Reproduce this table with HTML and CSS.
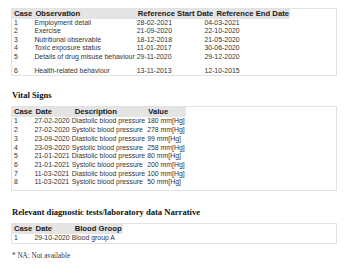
FILE: index.html
```html
<!DOCTYPE html>
<html>
<head>
<meta charset="utf-8">
<link rel="stylesheet" href="styles.css">
</head>
<body>
<div class="box box-first">
  <table class="grid">
    <tr class="head"><th>Case</th><th>Observation</th><th>Reference Start Date</th><th>Reference End Date</th></tr>
    <tr><td>1</td><td>Employment detail</td><td>28-02-2021</td><td><span class="shift">04-03-2021</span></td></tr>
    <tr><td>2</td><td>Exercise</td><td>21-09-2020</td><td><span class="shift">22-10-2020</span></td></tr>
    <tr><td>3</td><td>Nutritional observable</td><td>18-12-2018</td><td><span class="shift">21-05-2020</span></td></tr>
    <tr><td>4</td><td>Toxic exposure status</td><td>11-01-2017</td><td><span class="shift">30-06-2020</span></td></tr>
    <tr><td>5</td><td>Details of drug misuse behaviour</td><td>29-11-2020</td><td><span class="shift">29-12-2020</span></td></tr>
    <tr class="tall"><td>6</td><td>Health-related behaviour</td><td>13-11-2013</td><td><span class="shift">12-10-2015</span></td></tr>
  </table>
</div>

<h2 class="title">Vital Signs</h2>
<div class="box box-vitals">
  <table class="grid">
    <tr class="head"><th>Case</th><th>Date</th><th class="indent">Description</th><th>Value</th></tr>
    <tr><td>1</td><td>27-02-2020</td><td>Diastolic blood pressure</td><td>180 mm[Hg]</td></tr>
    <tr><td>2</td><td>27-02-2020</td><td>Systolic blood pressure</td><td>278 mm[Hg]</td></tr>
    <tr><td>3</td><td>23-09-2020</td><td>Diastolic blood pressure</td><td>99 mm[Hg]</td></tr>
    <tr><td>4</td><td>23-09-2020</td><td>Systolic blood pressure</td><td>258 mm[Hg]</td></tr>
    <tr><td>5</td><td>21-01-2021</td><td>Diastolic blood pressure</td><td>80 mm[Hg]</td></tr>
    <tr><td>6</td><td>21-01-2021</td><td>Systolic blood pressure</td><td>200 mm[Hg]</td></tr>
    <tr><td>7</td><td>11-03-2021</td><td>Diastolic blood pressure</td><td>100 mm[Hg]</td></tr>
    <tr><td>8</td><td>11-03-2021</td><td>Systolic blood pressure</td><td>50 mm[Hg]</td></tr>
  </table>
</div>

<h2 class="title title-lab">Relevant diagnostic tests/laboratory data Narrative</h2>
<div class="box box-lab">
  <table class="grid">
    <tr class="head"><th>Case</th><th>Date</th><th class="indent">Blood Groop</th></tr>
    <tr><td>1</td><td>29-10-2020</td><td>Blood group A</td></tr>
  </table>
</div>

<p class="note">* NA: Not available</p>
</body>
</html>
```
FILE: styles.css
```css
html, body {
  margin: 0;
  padding: 0;
  background: #ffffff;
}
body {
  padding: 8px 13px 0 11px;
  color: #222222;
}
.box {
  border: 1px solid #e2e2e2;
  width: 324px;
}
.box-vitals {
  padding-bottom: 3px;
}
.box-vitals .grid td {
  line-height: 8.7px;
}
.box-lab {
  padding-bottom: 1px;
}
.grid {
  border-collapse: collapse;
  font-family: "Liberation Sans", Arial, sans-serif;
}
.grid th {
  background: #e4e4e4;
  font-size: 7.7px;
  font-weight: bold;
  text-align: left;
  line-height: 10px;
  padding: 0 1px 0 2px;
  white-space: nowrap;
  color: #1a1a1a;
}
.grid th.indent {
  padding-left: 4px;
}
.grid td {
  font-size: 6.9px;
  line-height: 8.4px;
  padding: 0 1px 0 1px;
  white-space: nowrap;
  color: #333333;
}
.grid td:first-child {
  padding-left: 2px;
}
.grid tr.tall td {
  padding-top: 6px;
}
.shift {
  margin-left: -11px;
}
.title {
  font-family: "Liberation Serif", "Times New Roman", serif;
  font-size: 8.6px;
  font-weight: bold;
  line-height: 10px;
  margin: 14px 0 6px 1px;
  color: #111111;
}
.title-lab {
  margin-top: 16px;
}
.note {
  font-family: "Liberation Serif", "Times New Roman", serif;
  font-size: 7.2px;
  line-height: 9px;
  margin: 8px 0 0 1px;
  color: #333333;
}
```
